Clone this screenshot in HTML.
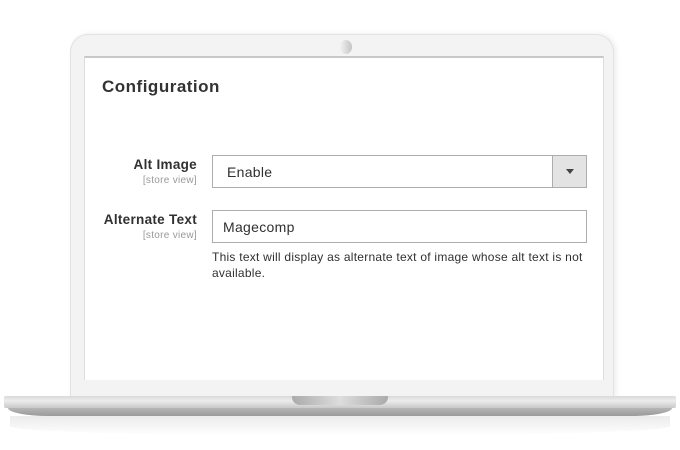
<!DOCTYPE html>
<html><head><meta charset="utf-8"><style>
*{margin:0;padding:0;box-sizing:border-box}
body{width:680px;height:450px;background:#fff;position:relative;overflow:hidden;font-family:"Liberation Sans",sans-serif;color:#303030}
.lid{position:absolute;left:70px;top:34px;width:544px;height:364px;background:#f3f3f3;border:1px solid #e2e2e2;border-radius:18px 18px 0 0;box-shadow:2px 0 6px rgba(0,0,0,.08)}
.cam{position:absolute;left:340px;top:40px;width:12px;height:14px;border-radius:50%;background:linear-gradient(90deg,#f2f2f2,#c4c4c4)}
.screen{position:absolute;left:84px;top:56px;width:520px;height:324px;background:#fff;border-top:2px solid #c8c8c8;border-left:1px solid #ddd;border-right:1px solid #ddd}
.base{position:absolute;left:4px;top:396px;width:672px;height:12px;background:linear-gradient(#d9d9d9,#ececec 40%,#c9c9c9);border-radius:2px}
.base2{position:absolute;left:8px;top:408px;width:664px;height:8px;background:linear-gradient(#b5b5b5,#9a9a9a);border-radius:0 0 40px 40px/0 0 8px 8px}
.shadow{position:absolute;left:10px;top:416px;width:660px;height:20px;background:linear-gradient(rgba(0,0,0,.08),rgba(0,0,0,0));border-radius:0 0 50% 50%}
.notch{position:absolute;left:292px;top:396px;width:96px;height:9px;background:linear-gradient(90deg,#aaa,#ddd 50%,#aaa);border-radius:0 0 8px 8px}
h1{position:absolute;left:102px;top:77px;font-size:17px;font-weight:bold;color:#333;letter-spacing:.5px}
.lbl{position:absolute;right:483px;text-align:right;font-size:13.5px;font-weight:bold;color:#303030;white-space:nowrap;letter-spacing:.3px}
.sv{position:absolute;right:483px;font-size:10px;color:#999;white-space:nowrap;letter-spacing:.3px}
.box{position:absolute;left:212px;width:375px;height:33px;border:1px solid #adadad;background:#fff;font-size:14px;color:#303030;padding-left:14px;line-height:33px;letter-spacing:.3px}
.btn{position:absolute;right:0;top:0;width:34px;height:31px;background:#e3e3e3;border-left:1px solid #adadad}
.btn:after{content:"";position:absolute;left:13px;top:13px;border-left:4px solid transparent;border-right:4px solid transparent;border-top:5px solid #444}
.help{position:absolute;left:212px;top:249px;width:385px;font-size:12px;line-height:16px;color:#303030;letter-spacing:.25px}
</style></head><body>
<div class="lid"></div>
<div class="cam"></div>
<div class="screen"></div>
<div class="shadow"></div>
<div class="base"></div>
<div class="base2"></div>
<div class="notch"></div>
<h1>Configuration</h1>
<div class="lbl" style="top:157px">Alt Image</div>
<div class="sv" style="top:175px">[store view]</div>
<div class="box" style="top:155px">Enable<div class="btn"></div></div>
<div class="lbl" style="top:212px">Alternate Text</div>
<div class="sv" style="top:230px">[store view]</div>
<div class="box" style="top:210px;padding-left:10px">Magecomp</div>
<div class="help">This text will display as alternate text of image whose alt text is not available.</div>
</body></html>
